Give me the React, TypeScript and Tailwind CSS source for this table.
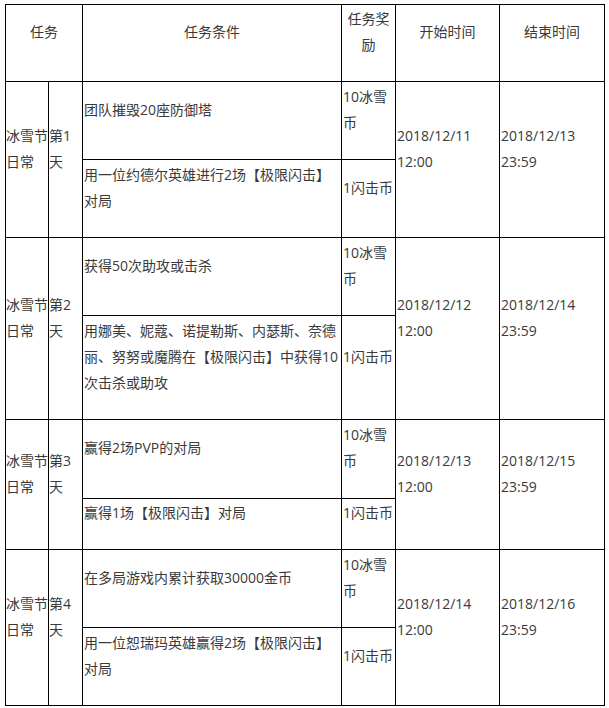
const days = [
  {
    day: "第1",
    start: "2018/12/11 12:00",
    end: "2018/12/13 23:59",
    tasks: [
      { cond: "团队摧毁20座防御塔", reward: "10冰雪币", h: "h-[78px]" },
      { cond: "用一位约德尔英雄进行2场【极限闪击】对局", reward: "1闪击币", h: "h-[78px]" },
    ],
  },
  {
    day: "第2",
    start: "2018/12/12 12:00",
    end: "2018/12/14 23:59",
    tasks: [
      { cond: "获得50次助攻或击杀", reward: "10冰雪币", h: "h-[78px]" },
      { cond: "用娜美、妮蔻、诺提勒斯、内瑟斯、奈德丽、努努或魔腾在【极限闪击】中获得10次击杀或助攻", reward: "1闪击币", h: "h-[104px]" },
    ],
  },
  {
    day: "第3",
    start: "2018/12/13 12:00",
    end: "2018/12/15 23:59",
    tasks: [
      { cond: "赢得2场PVP的对局", reward: "10冰雪币", h: "h-[79px]" },
      { cond: "赢得1场【极限闪击】对局", reward: "1闪击币", h: "h-[51px]" },
    ],
  },
  {
    day: "第4",
    start: "2018/12/14 12:00",
    end: "2018/12/16 23:59",
    tasks: [
      { cond: "在多局游戏内累计获取30000金币", reward: "10冰雪币", h: "h-[78px]" },
      { cond: "用一位恕瑞玛英雄赢得2场【极限闪击】对局", reward: "1闪击币", h: "h-[78px]" },
    ],
  },
];

const cell = "border border-black align-middle px-px pt-0 pb-[22px] text-left";
const tight = "border border-black align-middle px-0 pt-0 pb-[22px] text-left whitespace-nowrap overflow-visible";
const head = "border border-black align-middle px-px pt-0 pb-[22px] text-center";

export default function App() {
  return (
    <div className="min-h-[708px] w-[609px] bg-white pl-[5px] pt-[4px] text-[14px] leading-[26px] text-[#3a3a3a] font-['Open_Sans','Noto_Sans_CJK_SC',sans-serif]">
      <table className="w-[600px] table-fixed border-collapse">
        <colgroup>
          <col className="w-[43px]" />
          <col className="w-[34px]" />
          <col className="w-[259px]" />
          <col className="w-[54px]" />
          <col className="w-[104px]" />
          <col className="w-[105px]" />
        </colgroup>
        <tbody>
          <tr className="h-[77px]">
            <td colSpan={2} className={head}>任务</td>
            <td className={head}>任务条件</td>
            <td className={head}>任务奖励</td>
            <td className={head}>开始时间</td>
            <td className={head}>结束时间</td>
          </tr>
          {days.map((d) =>
            d.tasks.map((t, i) => (
              <tr key={d.day + i} className={t.h}>
                {i === 0 && (
                  <>
                    <td rowSpan={2} className={tight}>冰雪节<br />日常</td>
                    <td rowSpan={2} className={tight}>{d.day}<br />天</td>
                  </>
                )}
                <td className={cell}>{t.cond}</td>
                <td className={cell}>{t.reward}</td>
                {i === 0 && (
                  <>
                    <td rowSpan={2} className={cell}>{d.start}</td>
                    <td rowSpan={2} className={cell}>{d.end}</td>
                  </>
                )}
              </tr>
            ))
          )}
        </tbody>
      </table>
    </div>
  );
}
